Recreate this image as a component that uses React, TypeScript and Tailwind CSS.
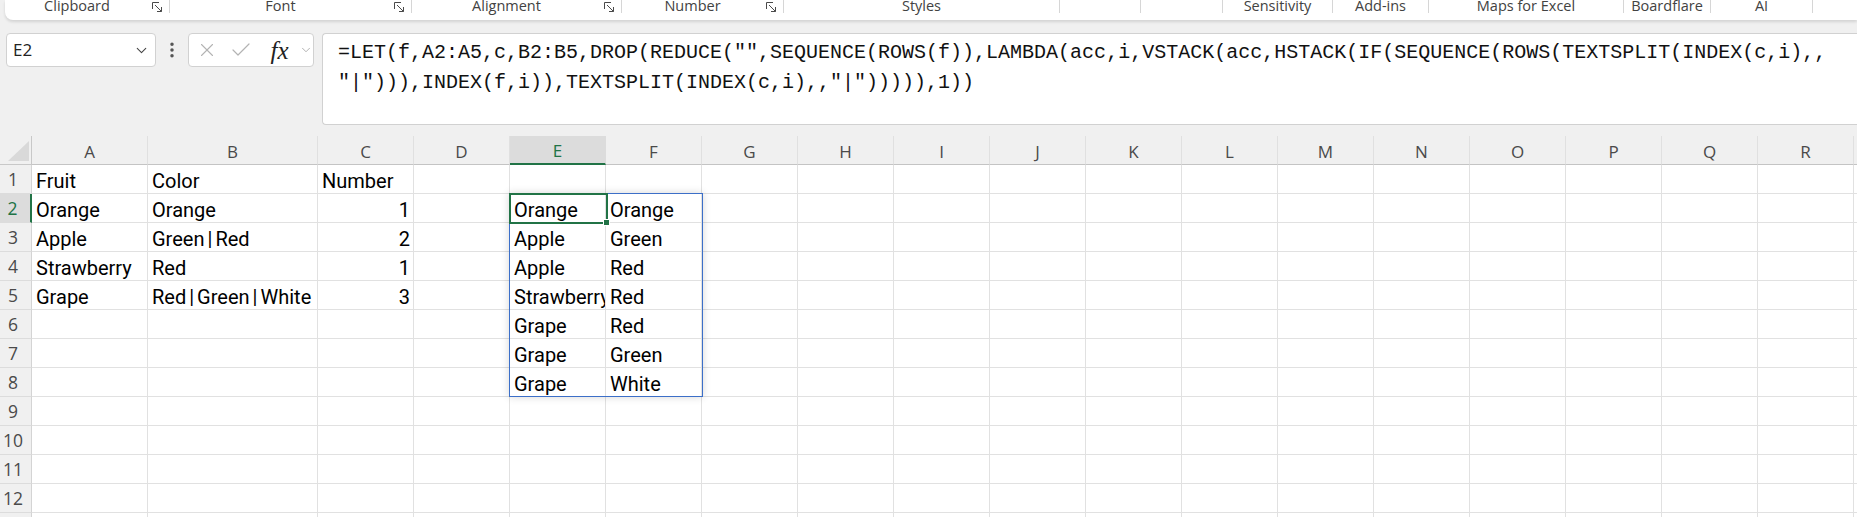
import React from 'react';
import { ChevronDown, EllipsisVertical, X, Check } from 'lucide-react';

type Group = { label: string; w: string; launcher?: boolean };

const GROUPS: Group[] = [
  { label: 'Clipboard', w: 'w-[165px]', launcher: true },
  { label: 'Font', w: 'w-[242px]', launcher: true },
  { label: 'Alignment', w: 'w-[210px]', launcher: true },
  { label: 'Number', w: 'w-[162px]', launcher: true },
  { label: 'Styles', w: 'w-[276px]' },
  { label: '', w: 'w-[81px]' },
  { label: '', w: 'w-[82px]' },
  { label: 'Sensitivity', w: 'w-[110px]' },
  { label: 'Add-ins', w: 'w-[96px]' },
  { label: 'Maps for Excel', w: 'w-[195px]' },
  { label: 'Boardflare', w: 'w-[87px]' },
  { label: 'AI', w: 'w-[102px]' },
];

const COLS: { id: string; w: string }[] = [
  { id: 'A', w: 'w-[116px]' },
  { id: 'B', w: 'w-[170px]' },
  ...'CDEFGHIJKLMNOPQR'.split('').map((id) => ({ id, w: 'w-[96px]' })),
  { id: 'S', w: 'w-[96px]' },
];

// cell values keyed by row, then column letter
const DATA: Record<number, Record<string, string>> = {
  1: { A: 'Fruit', B: 'Color', C: 'Number' },
  2: { A: 'Orange', B: 'Orange', C: '1', E: 'Orange', F: 'Orange' },
  3: { A: 'Apple', B: 'Green|Red', C: '2', E: 'Apple', F: 'Green' },
  4: { A: 'Strawberry', B: 'Red', C: '1', E: 'Apple', F: 'Red' },
  5: { A: 'Grape', B: 'Red|Green|White', C: '3', E: 'Strawberry', F: 'Red' },
  6: { E: 'Grape', F: 'Red' },
  7: { E: 'Grape', F: 'Green' },
  8: { E: 'Grape', F: 'White' },
};

const ROWS = Array.from({ length: 13 }, (_, i) => i + 1);

const FORMULA_1 =
  '=LET(f,A2:A5,c,B2:B5,DROP(REDUCE("",SEQUENCE(ROWS(f)),LAMBDA(acc,i,VSTACK(acc,HSTACK(IF(SEQUENCE(ROWS(TEXTSPLIT(INDEX(c,i),,';
const FORMULA_2 = '"|"))),INDEX(f,i)),TEXTSPLIT(INDEX(c,i),,"|"))))),1))';

const Launcher: React.FC = () => (
  <svg width="11" height="11" viewBox="0 0 11 11" fill="none" stroke="#4a4a4a" strokeWidth="1">
    <path d="M0.5 7V0.5H7" />
    <path d="M3 3L9.5 9.5M9.5 5V9.5H5" />
  </svg>
);

const CellText: React.FC<{ value: string }> = ({ value }) => {
  const parts = value.split('|');
  return (
    <>
      {parts.map((p, i) => (
        <React.Fragment key={i}>
          {i > 0 && <span className="px-[3px]">|</span>}
          {p}
        </React.Fragment>
      ))}
    </>
  );
};

const Ribbon: React.FC = () => (
  <div className="ml-[5px] h-[20px] bg-white rounded-bl-[8px] shadow-[0_2px_3px_rgba(0,0,0,0.12)] flex font-['Open_Sans',sans-serif] text-[14.5px] text-[#424242]">
    {GROUPS.map((g, i) => (
      <div key={i} className={`${g.w} shrink-0 flex h-full`}>
        <div className="flex-1 text-center leading-none -mt-[1px] whitespace-nowrap">{g.label}</div>
        {g.launcher && (
          <div className="w-[20px] pt-[2px] pl-[3px]">
            <Launcher />
          </div>
        )}
        <div className="w-px h-[13px] bg-[#d6d6d6]" />
      </div>
    ))}
  </div>
);

const FormulaBar: React.FC = () => (
  <div className="mt-[13px] pl-[6px] flex items-start">
    <div className="w-[150px] h-[34px] shrink-0 rounded-[4px] border border-[#d1d1d1] bg-white flex items-center pl-[6px] pr-[5px]">
      <span className="font-['Open_Sans',sans-serif] text-[17px] text-[#222]">E2</span>
      <ChevronDown className="ml-auto text-[#444]" size={17} strokeWidth={1.5} />
    </div>
    <div className="w-[32px] h-[34px] shrink-0 flex items-center justify-center text-[#555]">
      <EllipsisVertical size={20} strokeWidth={2.2} />
    </div>
    <div className="w-[126px] h-[34px] shrink-0 rounded-[4px] border border-[#d1d1d1] bg-white flex items-center">
      <div className="w-[35px] flex justify-center text-[#b3b3b3]">
        <X size={22} strokeWidth={1.2} />
      </div>
      <div className="w-[34px] flex justify-center text-[#b3b3b3]">
        <Check size={24} strokeWidth={1.2} />
      </div>
      <div className="w-[40px] pl-[3px] flex justify-center font-['Liberation_Serif',serif] italic text-[25px] leading-none text-[#222]">
        fx
      </div>
      <div className="w-[15px] flex justify-center text-[#999]">
        <ChevronDown size={14} strokeWidth={1.3} />
      </div>
    </div>
    <div className="ml-[8px] flex-1 h-[92px] rounded-l-[4px] border-y border-l border-[#d1d1d1] bg-white pl-[15px] pt-[4px] font-['Liberation_Mono',monospace] text-[20px] leading-[30px] text-[#111] whitespace-pre overflow-hidden">
      <div>{FORMULA_1}</div>
      <div>{FORMULA_2}</div>
    </div>
  </div>
);

const Grid: React.FC = () => (
  <div className="relative mt-[11px] w-full">
    <div className="flex h-[29px]">
      <div className="w-[32px] shrink-0 border-r border-b border-[#c8c8c8] bg-[#f0f0f0]">
        <svg width="32" height="28" viewBox="0 0 32 28">
          <polygon points="29,5 29,25 8,25" fill="#d9d9d9" />
        </svg>
      </div>
      {COLS.map((c) => {
        const sel = c.id === 'E';
        return (
          <div
            key={c.id}
            className={`${c.w} shrink-0 flex items-center justify-center pt-[3px] font-['Open_Sans',sans-serif] text-[17px] ${
              sel
                ? 'bg-[#dcdcdc] text-[#217346] border-b-2 border-b-[#217346] border-r border-r-[#dcdcdc]'
                : 'bg-[#f0f0f0] text-[#4a4a4a] border-b border-b-[#c4c4c4] border-r border-r-[#e0e0e0]'
            }`}
          >
            {c.id}
          </div>
        );
      })}
    </div>
    {ROWS.map((r) => {
      const row = DATA[r] || {};
      const sel = r === 2;
      return (
        <div key={r} className="flex h-[29px]">
          <div
            className={`w-[32px] shrink-0 flex items-center justify-center pr-[5px] border-b border-b-[#dcdcdc] font-['Open_Sans',sans-serif] text-[17.5px] ${
              sel
                ? 'bg-[#dcdcdc] text-[#217346] border-r-2 border-r-[#217346]'
                : 'bg-[#f0f0f0] text-[#4a4a4a] border-r border-r-[#d4d4d4]'
            }`}
          >
            {r}
          </div>
          {COLS.map((c) => {
            const v = row[c.id];
            const num = v !== undefined && /^\d+$/.test(v);
            return (
              <div
                key={c.id}
                className={`${c.w} shrink-0 bg-white border-r border-b border-[#e1e1e1] flex items-end pb-[2px] overflow-hidden whitespace-nowrap font-['Roboto',sans-serif] text-[20px] leading-[20px] text-black ${
                  num ? 'justify-end pr-[3px]' : 'pl-[4px]'
                }`}
              >
                {v !== undefined && <CellText value={v} />}
              </div>
            );
          })}
        </div>
      );
    })}
    {/* spill range E2:F8 */}
    <div className="absolute left-[509px] top-[57px] w-[194px] h-[204px] border border-[#3c6fc8] shadow-[0_0_8px_rgba(0,0,0,0.16)] pointer-events-none" />
    {/* active cell E2 */}
    <div className="absolute left-[509px] top-[57px] w-[99px] h-[31px] border-2 border-[#217346] pointer-events-none">
      <div className="absolute right-[-4px] bottom-[-4px] w-[7px] h-[7px] bg-[#217346] border border-white" />
    </div>
  </div>
);

export default function App() {
  return (
    <div className="w-full h-screen overflow-hidden bg-[#f0f0f0]">
      <Ribbon />
      <FormulaBar />
      <Grid />
    </div>
  );
}
